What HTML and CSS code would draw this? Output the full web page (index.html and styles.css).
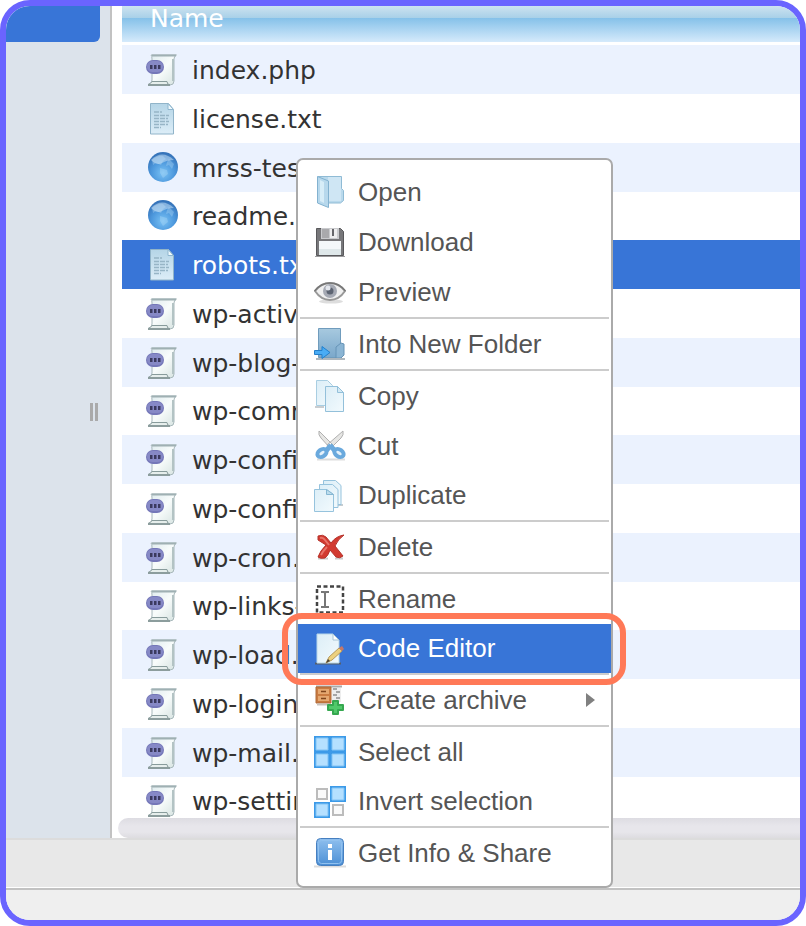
FILE: index.html
```html
<!DOCTYPE html>
<html lang="en">
<head>
  <meta charset="UTF-8">
  <title>File Manager</title>
  <link rel="stylesheet" href="styles.css">
</head>
<body>

<!-- icon sprite -->
<svg class="sprite" aria-hidden="true">
  <defs>
    <linearGradient id="paper" x1="0" y1="0" x2="1" y2="1">
      <stop offset="0" stop-color="#dce9ed"/><stop offset=".5" stop-color="#f8fcfb"/><stop offset="1" stop-color="#d5e2e0"/>
    </linearGradient>
    <linearGradient id="sheet" x1="0" y1="0" x2="0" y2="1">
      <stop offset="0" stop-color="#b5d5e7"/><stop offset="1" stop-color="#dcedf7"/>
    </linearGradient>
    <linearGradient id="light" x1="0" y1="0" x2="1" y2="1">
      <stop offset="0" stop-color="#dceef7"/><stop offset="1" stop-color="#f2fafd"/>
    </linearGradient>
    <linearGradient id="folder" x1="0" y1="0" x2="0" y2="1">
      <stop offset="0" stop-color="#a7c9df"/><stop offset="1" stop-color="#7ba8cb"/>
    </linearGradient>
    <linearGradient id="blue" x1="0" y1="0" x2="0" y2="1">
      <stop offset="0" stop-color="#8fbfee"/><stop offset="1" stop-color="#4b8fd5"/>
    </linearGradient>
    <radialGradient id="ball" cx=".5" cy=".7" r=".65">
      <stop offset="0" stop-color="#79c2f5"/><stop offset=".6" stop-color="#4c97dc"/><stop offset="1" stop-color="#3674ba"/>
    </radialGradient>
  </defs>

  <symbol id="i-php" viewBox="0 0 32 32">
    <path d="M5 1h25.500q-2.500 1-2.500 4v22q0 4-4 4H2q4-1 4-5V5q0-3-1-4z" fill="url(#paper)" stroke="#a8b8bb"/>
    <path d="M6 1.500h24" stroke="#9fb0b3" stroke-width="2"/>
    <path d="M2 30.500q3-1 4-3h15q0 3 3 3.500z" fill="#e6eeec" stroke="#889b9b"/>
    <path d="M2 31h22" stroke="#8c9d9d" stroke-width="2"/>
    <path d="M27 5v22" stroke="#b3c3c4" stroke-width="2"/>
    <rect x="0" y="6" width="18" height="14" rx="7" fill="#7477b8"/>
    <rect x="1" y="7" width="16" height="11" rx="5.500" fill="#8689c6"/>
    <path d="M4 11h2.500v4H4zM8 11h2.500v4H8zM12 11h2.500v4H12z" fill="#3b3a5f"/>
  </symbol>

  <symbol id="i-txt" viewBox="0 0 32 32">
    <path d="M4.500.5h18l5 6v24.500h-23z" fill="url(#sheet)" stroke="#91b4c9"/>
    <path d="M22 .5v6h5.500z" fill="#eef8fc" stroke="#8eb6cf"/>
    <path d="M8 9h8M8 12.500h15M8 15.500h14M8 18.500h15M8 21.500h14M8 24.500h7" stroke="#97b5c6" stroke-width="1.500" stroke-dasharray="5 1"/>
  </symbol>

  <symbol id="i-html" viewBox="0 0 32 32">
    <circle cx="17" cy="15" r="15" fill="url(#ball)"/>
    <path d="M6 8q6-5 11-4l3 3-3 2-2 4-5-2-3 2zM23 7l5 5-2 5-3-4-3 1 1-4zM14 16l7 2 1 4-5 4-3-5z" fill="#b7def7" opacity=".35"/>
    <path d="M5 8q11-11 23 0-7 0-12 3T5 8z" fill="#cfe6f8" opacity=".5"/>
  </symbol>

  <symbol id="i-open" viewBox="0 0 32 32">
    <path d="M4 .5h23.500v12l2 2v10l-3 2.500H4z" fill="#b9d9ec" stroke="#8fbbd5"/>
    <path d="M14 1h13v24H14z" fill="#cfe6f4"/>
    <path d="M3.500.5l11 4.500v26.500l-11-4.500z" fill="#b7d8ec" stroke="#83b2d0"/>
    <path d="M6 4l4 2v21l-4-2z" fill="#d7edf8"/>
  </symbol>

  <symbol id="i-download" viewBox="0 0 32 32">
    <path d="M2.500 2.500h24l3 3v24h-27z" fill="#77777a" stroke="#58585b"/>
    <path d="M7 2h18v11H7z" fill="#c9cacd"/>
    <path d="M8 3h7v9H8z" fill="#a9a9ac"/>
    <path d="M16 3h7v9h-7z" fill="#ededee"/>
    <path d="M18 3h2v7h-2z" fill="#66666a"/>
    <path d="M5 15h22v14H5z" fill="#f4f8fa"/>
    <path d="M5 23h22v6H5z" fill="#dfe8ea"/>
    <path d="M1 30.500h30" stroke="#9a9a9c"/>
  </symbol>

  <symbol id="i-preview" viewBox="0 0 32 32">
    <ellipse cx="17" cy="25.500" rx="12" ry="2" fill="#ddd"/>
    <path d="M1 15Q7 7 16 7t15 8q-6 9-15 9T1 15z" fill="#f0f0f0" stroke="#999" stroke-width="2"/>
    <path d="M.5 15Q7 7 16 7t15.500 8" fill="none" stroke="#777" stroke-width="1.500"/>
    <circle cx="16" cy="15" r="7" fill="#a6aab4"/>
    <circle cx="16" cy="15" r="3.500" fill="#5d6472"/>
    <circle cx="14" cy="12" r="2.500" fill="#e4e7ed"/>
  </symbol>

  <symbol id="i-into" viewBox="0 0 32 32">
    <path d="M4.500.5h22v29h-22z" fill="url(#folder)" stroke="#709cbd"/>
    <path d="M22 30V19l5-4 3 1v11l-3 3z" fill="#8bb5d4" stroke="#6794b7"/>
    <path d="M2 31h29" stroke="#afb7bd" stroke-width="2"/>
    <path d="M.5 22.500H8v-4l8 6-8 6v-4H.5z" fill="#49acf5" stroke="#237fcb"/>
  </symbol>

  <symbol id="i-copy" viewBox="0 0 32 32">
    <path d="M1 27h9" stroke="#c9cdd0" stroke-width="2"/>
    <path d="M2.500.5h11l5 5v20h-16z" fill="url(#light)" stroke="#a9cee2"/>
    <path d="M11.500 6.500h12l6 6v19h-18z" fill="url(#light)" stroke="#93c0da"/>
    <path d="M23.500 6.500v6h6z" fill="#d4eaf5" stroke="#93c0da"/>
  </symbol>

  <symbol id="i-cut" viewBox="0 0 32 32">
    <path d="M3 29.500h28" stroke="#ddd" stroke-width="2"/>
    <path d="M5 1q-1 4 2 7l9 10 3-3zM29 1q1 4-2 7L16 19l-3-4z" fill="#e6e6e4" stroke="#b0b0b0"/>
    <path d="M17 15l-5 6M16 15l5 6" stroke="#6aa9dd" stroke-width="5"/>
    <ellipse cx="8" cy="23" rx="5" ry="3.500" transform="rotate(-35 8 23)" fill="#e4f1fb" stroke="#6aa9dd" stroke-width="4"/>
    <ellipse cx="25" cy="23" rx="5" ry="3.500" transform="rotate(35 25 23)" fill="#e4f1fb" stroke="#6aa9dd" stroke-width="4"/>
  </symbol>

  <symbol id="i-duplicate" viewBox="0 0 32 32">
    <path d="M20 25h9" stroke="#c5ccd0" stroke-width="2"/>
    <path d="M9.500.5h12l5.500 5v19H9.500z" fill="url(#light)" stroke="#96c3dd"/>
    <path d="M5.500 4.500h13l5.500 5v18H5.500z" fill="url(#light)" stroke="#96c3dd"/>
    <path d="M.5 9.500h12l7 5v17H.5z" fill="url(#light)" stroke="#96c3dd"/>
    <path d="M12.500 9.500v5h7z" fill="#bddded" stroke="#86b7d3"/>
  </symbol>

  <symbol id="i-delete" viewBox="0 0 32 32">
    <path d="M4 27.500h10M21 27.500h8" stroke="#ccc" stroke-width="2"/>
    <path d="M4 5q5-2 8 1l5 6q5-7 13-8-6 4-9 11l8 10q-3 3-7 1l-6-7q-2 6-5 8-5 1-7-1 2-6 8-12L4 9z" fill="#d23a30" stroke="#b5332b"/>
    <path d="M6 7q3-1 5 2l4 5M7 24q2-4 6-8" fill="none" stroke="#e8746a" stroke-width="2"/>
  </symbol>

  <symbol id="i-rename" viewBox="0 0 32 32">
    <path d="M3 3.500h26v26H3z" fill="none" stroke="#444" stroke-width="2.500" stroke-dasharray="4 2.500"/>
    <path d="M7 9h3l1 1 1-1h3M11 10v13M7 24h3l1-1 1 1h3" fill="none" stroke="#777" stroke-width="2"/>
  </symbol>

  <symbol id="i-edit" viewBox="0 0 32 32">
    <path d="M1 30.500h26" stroke="#555f6b" stroke-width="2"/>
    <path d="M3 1h16l6 6v23H3z" fill="url(#light)" stroke="#b9d8e8"/>
    <path d="M19 1v6h6z" fill="#fff" stroke="#a9c6d6"/>
    <path d="M12 30l3-6 10-9 3 3-10 9z" fill="#ecd17e" stroke="#b89a5c"/>
    <path d="M25 15l3-2 2 3-2 2z" fill="#c57768"/>
    <path d="M12 30l2-4 2 2z" fill="#4b4335"/>
  </symbol>

  <symbol id="i-archive" viewBox="0 0 32 32">
    <path d="M2 2.500h26" stroke="#aaa" stroke-width="2"/>
    <path d="M2 3h15v16H2z" fill="#c97b41" stroke="#b06a38"/>
    <path d="M4 5h11v5H4zM4 12h11v5H4z" fill="#e5a871"/>
    <path d="M7 7.500h5M7 14.500h5" stroke="#80451d" stroke-width="1.500"/>
    <path d="M18 4h9v14h-9z" fill="#ededed"/>
    <path d="M19 5h4M22 8h4M19 11h4M22 14h4" stroke="#a6a6a6" stroke-width="2"/>
    <path d="M3 20.500h12" stroke="#c9c3be" stroke-width="2"/>
    <path d="M19 17h5v4h5v5h-5v4h-5v-4h-5v-5h5z" fill="#51c96a" stroke="#36a850" stroke-linejoin="round" stroke-width="2"/>
  </symbol>

  <symbol id="i-all" viewBox="0 0 32 32">
    <path d="M0 0h32v32H0z" fill="#3c9ae8"/>
    <path d="M2 2h12v12H2zM18 2h12v12H18zM2 18h12v12H2zM18 18h12v12H18z" fill="#b5e0ff" stroke="#80c3f5"/>
  </symbol>

  <symbol id="i-invert" viewBox="0 0 32 32">
    <path d="M16 0h16v16H16zM0 16h16v16H0z" fill="#3c9ae8"/>
    <path d="M18 2h12v12H18zM2 18h12v12H2z" fill="#b5e0ff" stroke="#80c3f5"/>
    <path d="M3 3h10v10H3zM19 19h10v10H19z" fill="#fafafa" stroke="#bcbcbc" stroke-width="2"/>
  </symbol>

  <symbol id="i-info" viewBox="0 0 32 32">
    <path d="M0 29.500h32" stroke="#ddd" stroke-width="2"/>
    <rect x="2.500" y="1.500" width="27" height="27" rx="4" fill="url(#blue)" stroke="#467fc0"/>
    <rect x="4.500" y="3.500" width="23" height="23" rx="3" fill="none" stroke="#91c1ef"/>
    <path d="M14 7h4v4h-4zM14 13h4v10h-4z" fill="#fff"/>
  </symbol>
</svg>

<div class="window">
  <main class="workspace">
    <aside class="sidebar">
      <div class="current-folder"></div>
      <div class="resize-handle"></div>
    </aside>

    <section class="files">
      <div class="file-scroll">
        <table class="file-table">
          <thead>
            <tr><th scope="col">Name</th></tr>
          </thead>
          <tbody>
            <tr><td><div class="file"><svg class="icon"><use href="#i-php"/></svg>index.php</div></td></tr>
            <tr><td><div class="file"><svg class="icon"><use href="#i-txt"/></svg>license.txt</div></td></tr>
            <tr><td><div class="file"><svg class="icon"><use href="#i-html"/></svg>mrss-test-example.html</div></td></tr>
            <tr><td><div class="file"><svg class="icon"><use href="#i-html"/></svg>readme.html</div></td></tr>
            <tr class="selected"><td><div class="file"><svg class="icon"><use href="#i-txt"/></svg>robots.txt</div></td></tr>
            <tr><td><div class="file"><svg class="icon"><use href="#i-php"/></svg>wp-activate.php</div></td></tr>
            <tr><td><div class="file"><svg class="icon"><use href="#i-php"/></svg>wp-blog-header.php</div></td></tr>
            <tr><td><div class="file"><svg class="icon"><use href="#i-php"/></svg>wp-comments-post.php</div></td></tr>
            <tr><td><div class="file"><svg class="icon"><use href="#i-php"/></svg>wp-config-sample.php</div></td></tr>
            <tr><td><div class="file"><svg class="icon"><use href="#i-php"/></svg>wp-config.php</div></td></tr>
            <tr><td><div class="file"><svg class="icon"><use href="#i-php"/></svg>wp-cron.php</div></td></tr>
            <tr><td><div class="file"><svg class="icon"><use href="#i-php"/></svg>wp-links-opml.php</div></td></tr>
            <tr><td><div class="file"><svg class="icon"><use href="#i-php"/></svg>wp-load.php</div></td></tr>
            <tr><td><div class="file"><svg class="icon"><use href="#i-php"/></svg>wp-login.php</div></td></tr>
            <tr><td><div class="file"><svg class="icon"><use href="#i-php"/></svg>wp-mail.php</div></td></tr>
            <tr><td><div class="file"><svg class="icon"><use href="#i-php"/></svg>wp-settings.php</div></td></tr>
          </tbody>
        </table>
      </div>
      <div class="scrollbar"></div>
    </section>
  </main>

  <div class="toolbar"></div>
  <footer class="statusbar"></footer>

  <div class="context-menu" role="menu">
    <div class="menu-group">
      <button class="menu-item" role="menuitem"><svg class="icon"><use href="#i-open"/></svg>Open</button>
      <button class="menu-item" role="menuitem"><svg class="icon"><use href="#i-download"/></svg>Download</button>
      <button class="menu-item" role="menuitem"><svg class="icon"><use href="#i-preview"/></svg>Preview</button>
    </div>
    <div class="menu-group">
      <button class="menu-item" role="menuitem"><svg class="icon"><use href="#i-into"/></svg>Into New Folder</button>
    </div>
    <div class="menu-group">
      <button class="menu-item" role="menuitem"><svg class="icon"><use href="#i-copy"/></svg>Copy</button>
      <button class="menu-item" role="menuitem"><svg class="icon"><use href="#i-cut"/></svg>Cut</button>
      <button class="menu-item" role="menuitem"><svg class="icon"><use href="#i-duplicate"/></svg>Duplicate</button>
    </div>
    <div class="menu-group">
      <button class="menu-item" role="menuitem"><svg class="icon"><use href="#i-delete"/></svg>Delete</button>
    </div>
    <div class="menu-group">
      <button class="menu-item" role="menuitem"><svg class="icon"><use href="#i-rename"/></svg>Rename</button>
      <button class="menu-item active" role="menuitem"><svg class="icon"><use href="#i-edit"/></svg>Code Editor</button>
    </div>
    <div class="menu-group">
      <button class="menu-item has-submenu" role="menuitem"><svg class="icon"><use href="#i-archive"/></svg>Create archive</button>
    </div>
    <div class="menu-group">
      <button class="menu-item" role="menuitem"><svg class="icon"><use href="#i-all"/></svg>Select all</button>
      <button class="menu-item" role="menuitem"><svg class="icon"><use href="#i-invert"/></svg>Invert selection</button>
    </div>
    <div class="menu-group">
      <button class="menu-item" role="menuitem"><svg class="icon"><use href="#i-info"/></svg>Get Info &amp; Share</button>
    </div>
  </div>
</div>

</body>
</html>
```
FILE: styles.css
```css
* {
  margin: 0;
  padding: 0;
  box-sizing: border-box;
}

body {
  background: #fff;
  font-family: "DejaVu Sans", Verdana, sans-serif;
  font-size: 25px;
  color: #333;
}

.sprite {
  position: absolute;
  width: 0;
  height: 0;
}

.icon {
  width: 32px;
  height: 32px;
  flex-shrink: 0;
}

.window {
  position: relative;
  display: flex;
  flex-direction: column;
  height: 100vh;
  border: 6px solid #6a64ff;
  border-radius: 30px;
  overflow: hidden;
}

.workspace {
  display: flex;
  flex: 1;
  min-height: 0;
}

/* sidebar */
.sidebar {
  display: flex;
  flex-direction: column;
  width: 106px;
  background: #dce3eb;
  border-right: 2px solid #c2c2c2;
}

.current-folder {
  height: 36px;
  margin-right: 10px;
  background: #3875d7;
  border-bottom-right-radius: 6px;
}

.resize-handle {
  align-self: flex-end;
  width: 8px;
  height: 18px;
  margin: 361px 12px 0 0;
  border: solid #aaa;
  border-width: 0 3px;
}

/* file list */
.files {
  display: flex;
  flex-direction: column;
  flex: 1;
  min-width: 0;
  padding-left: 6px;
}

.file-scroll {
  flex: 1;
  min-height: 0;
  padding-left: 4px;
  overflow: hidden;
}

.file-table {
  width: 100%;
  border-spacing: 0;
}

th {
  height: 39px;
  padding: 0 28px 11px;
  border-bottom: 3px solid #fff;
  background: linear-gradient(#cde3f0, #a8d0e8 12px, #85c1e9 12px, #d5eafb 36px);
  color: #fff;
  font-weight: normal;
  line-height: 25px;
  text-align: left;
}

td {
  height: 49px;
}

tr:nth-child(4n) td {
  height: 48px;
}

tbody tr:nth-child(odd) {
  background: #ebf2fe;
}

tbody tr.selected:nth-child(odd) {
  background: #3875d7;
  color: #fff;
}

.file {
  display: flex;
  align-items: flex-end;
  gap: 14px;
  padding-left: 24px;
  line-height: 30px;
  white-space: nowrap;
}

.scrollbar {
  height: 20px;
  border-radius: 10px 0 0 10px;
  background: linear-gradient(#dddce2, #e7e6eb 8px, #e7e6eb 14px, #dddce0);
}

.toolbar {
  height: 50px;
  background: #e8e8e8;
  border-top: 2px solid #dcdcdc;
  border-bottom: 1px solid #fff;
}

.statusbar {
  height: 32px;
  background: #efefef;
  border-top: 2px solid #c2c2c2;
}

/* context menu */
.context-menu {
  position: absolute;
  top: 152px;
  left: 290px;
  width: 317px;
  padding: 7px 0 8px;
  background: #fff;
  border: 2px solid #aaa;
  border-radius: 7px;
}

.menu-group + .menu-group::before {
  content: "";
  display: block;
  height: 2px;
  margin: 0 2px;
  background: #ccc;
}

.menu-item {
  position: relative;
  display: flex;
  align-items: center;
  gap: 12px;
  width: 100%;
  height: 50px;
  padding: 0 16px;
  border: none;
  background: none;
  color: #555;
  font-family: "Liberation Sans", Arial, sans-serif;
  font-size: 26px;
  text-align: left;
  cursor: pointer;
}

.menu-group + .menu-group .menu-item:last-child:not(:first-child) {
  height: 49px;
}

.menu-item.active {
  background: #3875d7;
  color: #fff;
}

/* highlight ring around the chosen command */
.menu-item.active::after {
  content: "";
  position: absolute;
  z-index: 1;
  inset: -11px -15px -12px -16px;
  border: 6px solid #ff7957;
  border-radius: 20px;
}

.has-submenu::after {
  content: "";
  margin-left: auto;
  border-left: 9px solid #808080;
  border-top: 7px solid transparent;
  border-bottom: 7px solid transparent;
}
```
